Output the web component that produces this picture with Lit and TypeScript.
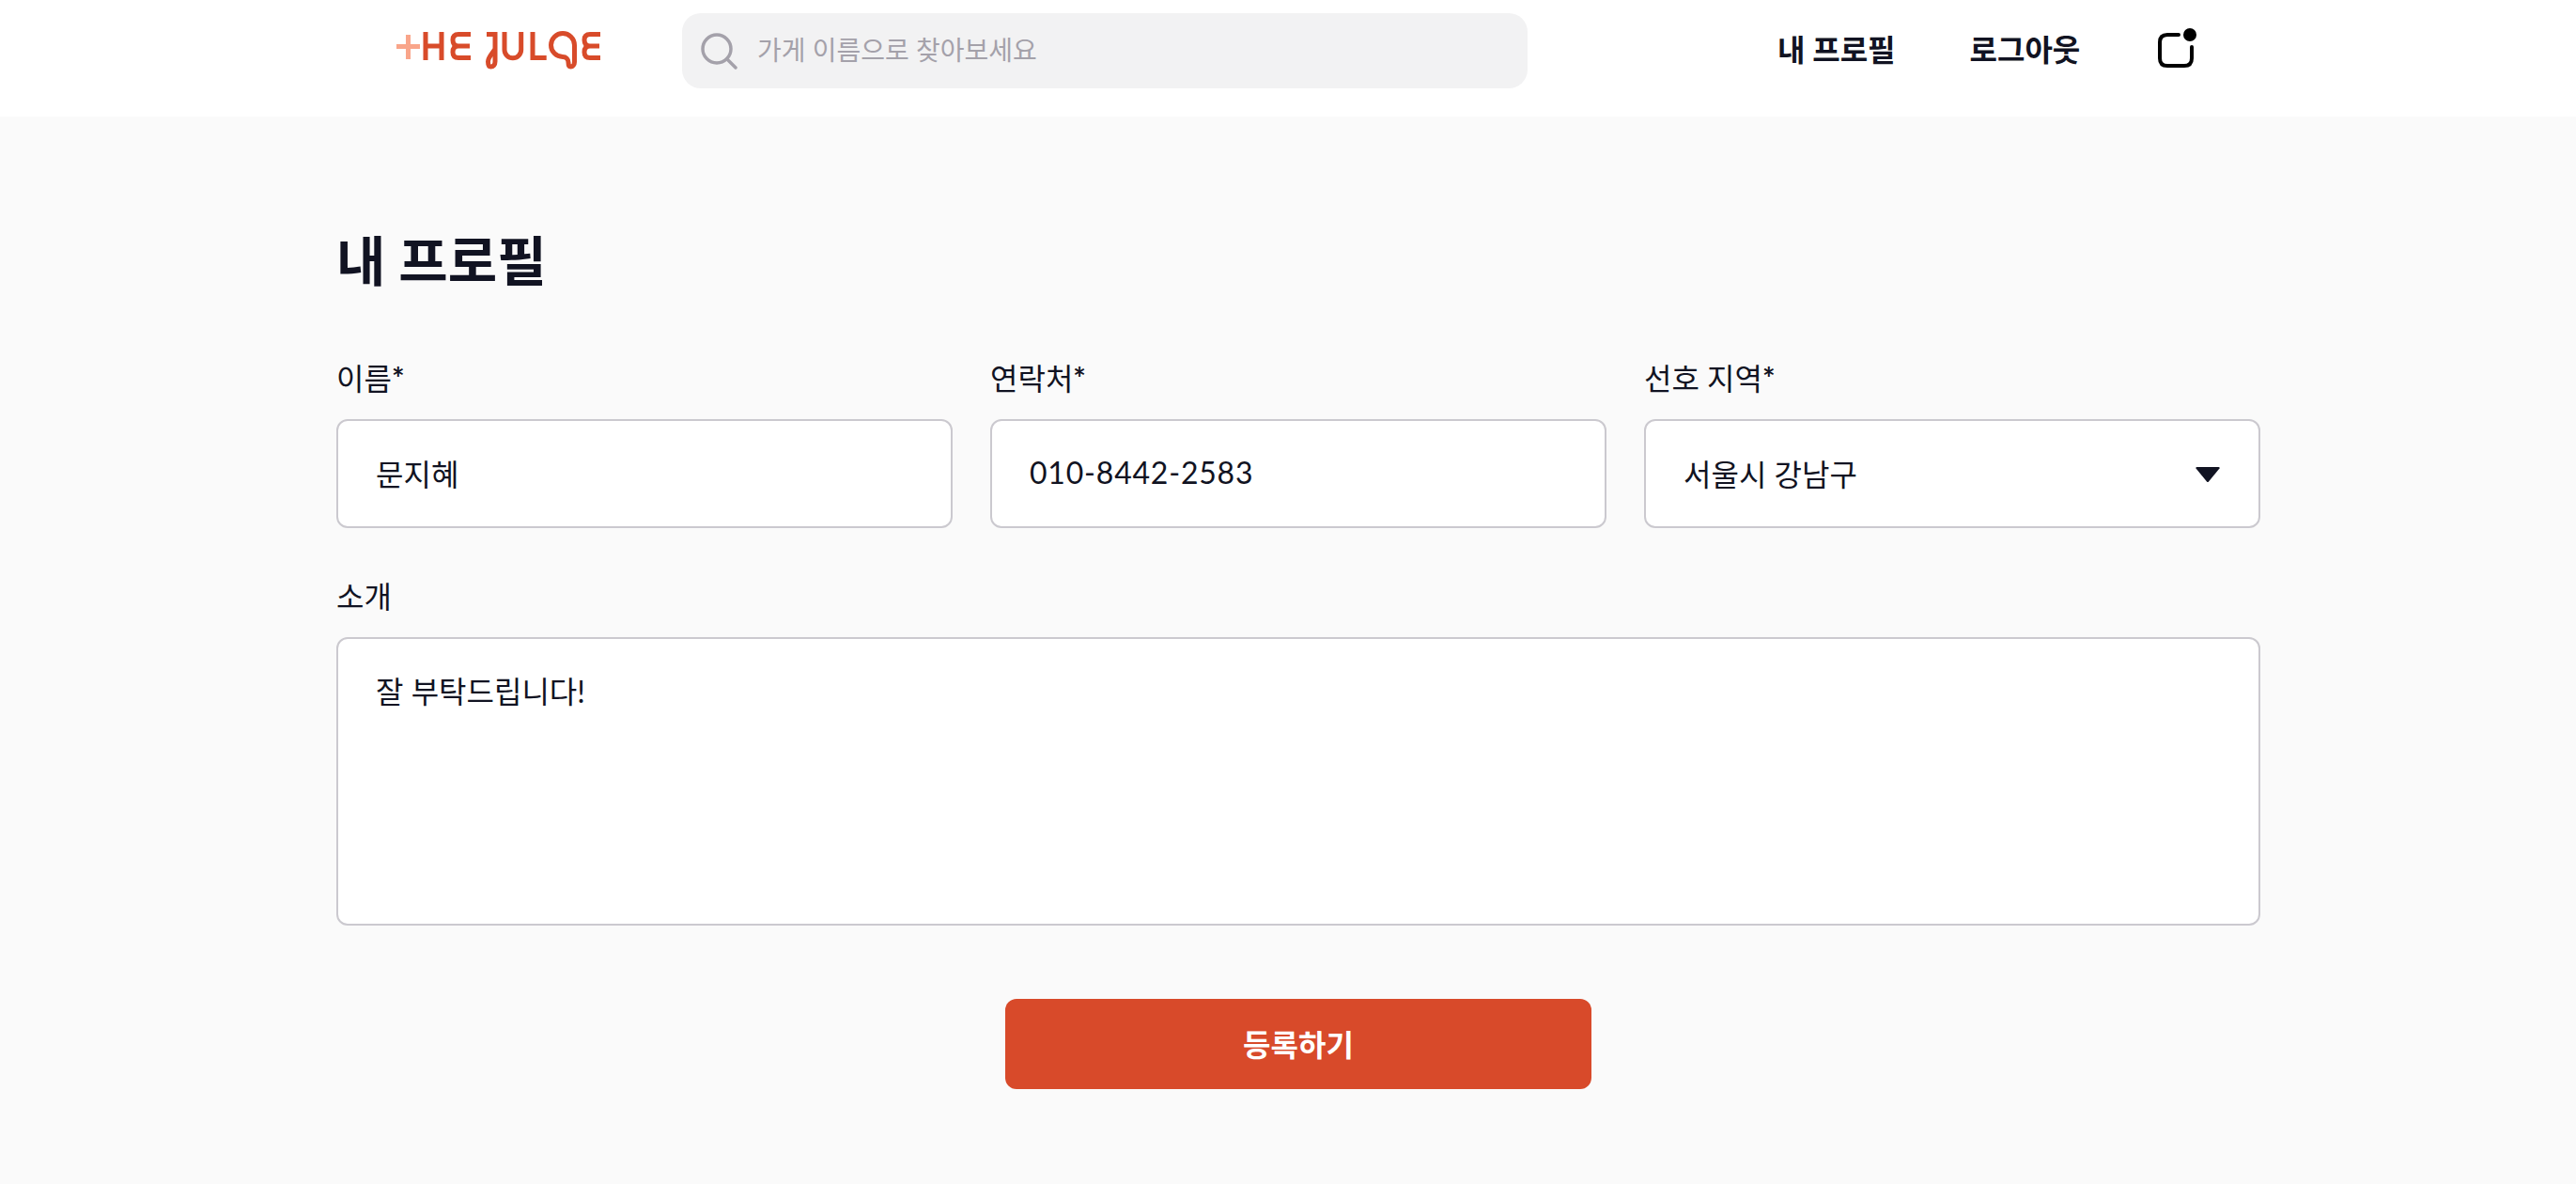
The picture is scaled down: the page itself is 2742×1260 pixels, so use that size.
import { LitElement, html, css } from "lit";
import { customElement } from "lit/decorators.js";

@customElement("app-root")
export class AppRoot extends LitElement {
  static styles = css`
    :host {
      display: block;
      min-height: 1260px;
      background: #fafafa;
      color: #111322;
      font-family: Lato, "Noto Sans CJK KR", sans-serif;
    }

    .header {
      height: 124px;
      background: #fff;
      display: flex;
      align-items: flex-start;
      padding-left: 422px;
      box-sizing: border-box;
    }

    .logo {
      width: 222px;
      height: 46px;
      margin-top: 30px;
      flex: none;
    }

    .search {
      width: 900px;
      height: 80px;
      margin: 14px 0 0 82px;
      padding-left: 20px;
      box-sizing: border-box;
      border-radius: 20px;
      background: #f2f2f3;
      display: flex;
      align-items: center;
      gap: 20px;
      flex: none;
    }

    .search svg {
      width: 40px;
      height: 40px;
      flex: none;
    }

    .search input {
      flex: 1;
      min-width: 0;
      border: 0;
      outline: 0;
      padding: 0 0 2px;
      background: transparent;
      font-family: inherit;
      font-size: 28px;
      color: #111322;
    }

    .search input::placeholder {
      color: #a4a1aa;
      opacity: 1;
    }

    .nav {
      display: flex;
      align-items: center;
      height: 102px;
      margin-left: 266px;
      gap: 79px;
      font-size: 32px;
      font-weight: 700;
    }

    .bell {
      width: 46px;
      height: 46px;
      margin: 2px 0 0 3px;
      display: block;
    }

    .main {
      width: 2048px;
      margin-left: 358px;
      padding-top: 120px;
    }

    h1 {
      margin: 0 0 75px;
      font-size: 57px;
      line-height: 66px;
      font-weight: 700;
    }

    .row {
      display: grid;
      grid-template-columns: repeat(3, 656px);
      gap: 40px;
      margin-bottom: 55px;
    }

    .field {
      display: flex;
      flex-direction: column;
      gap: 25px;
    }

    label {
      font-size: 32px;
      line-height: 36px;
    }

    .req {
      font-weight: 700;
    }

    .control {
      box-sizing: border-box;
      width: 100%;
      height: 116px;
      padding: 0 40px 3px;
      border: 2px solid #cbc9cf;
      border-radius: 12px;
      background: #fff;
      color: #111322;
      font-family: inherit;
      font-size: 32px;
      outline: 0;
    }

    .phone {
      letter-spacing: 0.8px;
    }

    .select {
      display: flex;
      align-items: center;
      justify-content: space-between;
    }

    .select svg {
      width: 26px;
      height: 16px;
      margin-right: 1px;
      margin-top: 5px;
    }

    textarea.control {
      display: block;
      height: 307px;
      padding: 36px 40px;
      line-height: 40px;
      resize: none;
    }

    .actions {
      display: flex;
      justify-content: center;
      margin-top: 78px;
    }

    button {
      width: 624px;
      height: 96px;
      padding: 0 0 2px;
      border: 0;
      border-radius: 12px;
      background: #d84a2a;
      color: #fff;
      font-family: inherit;
      font-size: 32px;
      font-weight: 700;
    }
  `;

  render() {
    return html`
      <div class="header">
        <svg class="logo" viewBox="0 0 222 46" fill="none" stroke-width="5">
          <path stroke="#f9a58a" d="M0 19.5H25M12.5 7V33" />
          <g stroke="#d84b2a">
            <path d="M31 4V34M48 4V34M31 19H48" />
            <path d="M79 6.500H66Q60 6.500 60 12.500Q60 19 66 19H78M66 19Q60 19 60 25.500Q60 31.500 66 31.500H79" />
            <path d="M96 6.500H105V35.500C105 39 103 41 100.500 41C98 41 97.500 38.500 97.500 35.500C97.500 31 102 27 105 22" />
            <path d="M115 4V23A8.850 8.850 0 0 0 132.700 23V4" />
            <path d="M145 4V31.500H159.700" />
            <path d="M177 30.500A12.500 12.500 0 1 1 189.500 18V36C189.500 39 187.500 41 185.500 41C183.500 41 183 38.500 183 36.500C183 33 180.500 30.500 177 30.500" />
            <path d="M217 6.500H206Q200 6.500 200 12.500Q200 19 206 19H216M206 19Q200 19 200 25.500Q200 31.500 206 31.500H217" />
          </g>
        </svg>
        <div class="search">
          <svg viewBox="0 0 40 40" fill="none" stroke="#a4a1aa" stroke-width="3.5">
            <circle cx="17" cy="18" r="15" />
            <path d="M28 29L37 38" stroke-linecap="round" />
          </svg>
          <input placeholder="가게 이름으로 찾아보세요" />
        </div>
        <div class="nav">
          <span>내 프로필</span>
          <span>로그아웃</span>
          <svg class="bell" viewBox="0 0 46 46" fill="none">
            <path d="M23 8H11Q3 8 3 16V33Q3 41 11 41H29Q37 41 37 33V21" stroke="#000" stroke-width="4" stroke-linecap="round" />
            <circle cx="35" cy="8" r="7" fill="#000" />
          </svg>
        </div>
      </div>
      <div class="main">
        <h1>내 프로필</h1>
        <div class="row">
          <div class="field">
            <label>이름<span class="req">*</span></label>
            <input class="control" value="문지혜" />
          </div>
          <div class="field">
            <label>연락처<span class="req">*</span></label>
            <input class="control phone" value="010-8442-2583" />
          </div>
          <div class="field">
            <label>선호 지역<span class="req">*</span></label>
            <div class="control select">
              <span>서울시 강남구</span>
              <svg viewBox="0 0 26 16"><path d="M1.500 0H24.500Q26 0 25.500 1.500L14 15.500Q13 16.500 12 15.500L.500 1.500Q0 0 1.500 0Z" fill="#111322" /></svg>
            </div>
          </div>
        </div>
        <div class="field">
          <label>소개</label>
          <textarea class="control">잘 부탁드립니다!</textarea>
        </div>
        <div class="actions"><button>등록하기</button></div>
      </div>
    `;
  }
}
